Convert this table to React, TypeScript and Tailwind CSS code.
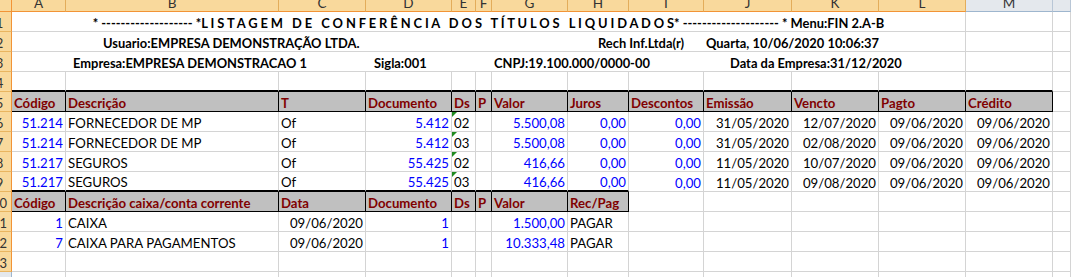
import React from "react";

type Cell = {
  t?: string;
  a?: "l" | "r";
  c?: "blue" | "black";
  tri?: boolean;
};

const COLS = ["A", "B", "C", "D", "E", "F", "G", "H", "I", "J", "K", "L", "M", ""];

function gridBorder(r: number, c: number): string {
  let b = "";
  if (r === 4 && c >= 1 && c <= 13) b += " border-b-2 border-b-black";
  else if (r === 5 && c >= 1 && c <= 13) b += " border-b border-b-black";
  else if (r === 9 && c >= 1 && c <= 8) b += " border-b-2 border-b-black";
  else if (r === 10 && c >= 1 && c <= 8) b += " border-b border-b-black";
  else b += " border-b border-b-[#d4d4d4]";
  if (r === 5 && c >= 1 && c <= 13) b += " border-r border-r-black";
  else if (r === 10 && c >= 1 && c <= 8) b += " border-r border-r-black";
  else b += " border-r border-r-[#d4d4d4]";
  return b;
}

function RowHeader({ n }: { n: number }) {
  const sel = n <= 13;
  return (
    <div
      className={
        "flex items-end overflow-hidden border-r border-b text-[13px] leading-[15px] text-[#333] " +
        (sel
          ? "bg-[#f9d99c] border-r-[#f29436] border-b-[#e9b560]"
          : "bg-[#e4e8ed] border-r-[#9eb6ce] border-b-[#c5d0dc]")
      }
    >
      <div className="w-[25px] -ml-[13px] shrink-0 text-center">{n}</div>
    </div>
  );
}

function DataCell({ r, c, cell, header }: { r: number; c: number; cell?: Cell; header: boolean }) {
  const align = cell?.a === "r" ? " justify-end" : " justify-start";
  const color = header
    ? " font-bold text-[#800000]"
    : cell?.c === "blue"
    ? " text-[#0000ff]"
    : " text-black";
  const bg = header ? " bg-[#c0c0c0]" : " bg-white";
  return (
    <div
      className={
        "relative flex items-end overflow-hidden whitespace-nowrap px-[2px] leading-[15px]" +
        align +
        color +
        bg +
        gridBorder(r, c)
      }
    >
      {cell?.tri ? (
        <div className="absolute left-0 top-0 h-0 w-0 border-t-[5px] border-r-[5px] border-t-[#208a20] border-r-transparent" />
      ) : null}
      {cell?.t ?? ""}
    </div>
  );
}

function Row({ r, cells, header = false, headerUpTo = 0 }: { r: number; cells: (Cell | undefined)[]; header?: boolean; headerUpTo?: number }) {
  return (
    <>
      <RowHeader n={r} />
      {COLS.map((_, i) => (
        <DataCell
          key={i}
          r={r}
          c={i + 1}
          cell={cells[i]}
          header={header && i + 1 <= headerUpTo}
        />
      ))}
    </>
  );
}

const L = (t: string, c: "blue" | "black" = "black"): Cell => ({ t, a: "l", c });
const R = (t: string, c: "blue" | "black" = "black"): Cell => ({ t, a: "r", c });

const headerRow1: (Cell | undefined)[] = [
  L("Código"), L("Descrição"), L("T"), L("Documento"), L("Ds"), L("P"), L("Valor"),
  L("Juros"), L("Descontos"), L("Emissão"), L("Vencto"), L("Pagto"), L("Crédito"),
];

const titulos = [
  ["51.214", "FORNECEDOR DE MP", "5.412", "02", "5.500,08", "31/05/2020", "12/07/2020"],
  ["51.214", "FORNECEDOR DE MP", "5.412", "03", "5.500,08", "31/05/2020", "02/08/2020"],
  ["51.217", "SEGUROS", "55.425", "02", "416,66", "11/05/2020", "10/07/2020"],
  ["51.217", "SEGUROS", "55.425", "03", "416,66", "11/05/2020", "09/08/2020"],
];

const headerRow2: (Cell | undefined)[] = [
  L("Código"), L("Descrição caixa/conta corrente"), L("Data"), L("Documento"), L("Ds"), L("P"),
  L("Valor"), L("Rec/Pag"),
];

const caixas = [
  ["1", "CAIXA", "09/06/2020", "1", "1.500,00", "PAGAR"],
  ["7", "CAIXA PARA PAGAMENTOS", "09/06/2020", "1", "10.333,48", "PAGAR"],
];

function TitleRow({ r, children }: { r: number; children: React.ReactNode }) {
  return (
    <>
      <RowHeader n={r} />
      <div className="col-span-12 flex items-end justify-center overflow-hidden whitespace-pre border-r border-b border-r-[#d4d4d4] border-b-[#d4d4d4] bg-white text-[12.9px] font-bold leading-[15px] text-black">
        {children}
      </div>
      <div className="border-r border-b border-[#d4d4d4] bg-white" />
      <div className="border-r border-b border-[#d4d4d4] bg-white" />
    </>
  );
}

export default function App() {
  return (
    <div className="h-[277px] w-[1071px] overflow-hidden bg-white font-['Lato','Liberation_Sans',sans-serif] text-[13.2px]">
      <div className="grid grid-cols-[12px_54px_213px_87px_86px_24px_16px_76px_61px_75px_88px_87px_87px_87px_18px] grid-rows-[12px_repeat(14,20px)]">
        {/* column headers */}
        <div className="border-r border-b border-r-[#f29436] border-b-[#f29436] bg-[#f9d99c]" />
        {COLS.map((h, i) => (
          <div
            key={h + i}
            className={
              "flex items-end justify-center overflow-hidden border-r border-b pb-[2px] text-[13.5px] leading-[12px] text-[#333] " +
              (i < 12
                ? "bg-[#f9d99c] border-r-[#e3ad5b] border-b-[#f29436]"
                : "bg-[#e4e8ed] border-r-[#b8c6d6] border-b-[#9eb6ce]")
            }
          >
            {h}
          </div>
        ))}

        <TitleRow r={1}>
          <span>{"* ------------------- *"}</span>
          <span className="tracking-[-0.1px]">
            {"L I S T A G E M   D E   C O N F E R Ê N C I A   D O S   T Í T U L O S   L I Q U I D A D O S"}
          </span>
          <span>{"* -------------------- * Menu:FIN 2.A-B"}</span>
        </TitleRow>
        <TitleRow r={2}>
          <div className="flex w-[771px]">
            <span className="w-[495px]">Usuario:EMPRESA DEMONSTRAÇÃO LTDA.</span>
            <span className="w-[108px]">Rech Inf.Ltda(r)</span>
            <span className="w-[168px]">Quarta, 10/06/2020 10:06:37</span>
          </div>
        </TitleRow>
        <TitleRow r={3}>
          <div className="flex w-[831px]">
            <span className="w-[301px]">Empresa:EMPRESA DEMONSTRACAO 1</span>
            <span className="w-[120px]">Sigla:001</span>
            <span className="w-[236px]">CNPJ:19.100.000/0000-00</span>
            <span className="w-[174px]">Data da Empresa:31/12/2020</span>
          </div>
        </TitleRow>

        <Row r={4} cells={[]} />
        <Row r={5} cells={headerRow1} header headerUpTo={13} />
        {titulos.map((d, i) => (
          <Row
            key={i}
            r={6 + i}
            cells={[
              R(d[0], "blue"),
              L(d[1]),
              L("Of"),
              R(d[2], "blue"),
              { t: d[3], a: "l", c: "black", tri: true },
              undefined,
              R(d[4], "blue"),
              R("0,00", "blue"),
              R("0,00", "blue"),
              R(d[5]),
              R(d[6]),
              R("09/06/2020"),
              R("09/06/2020"),
            ]}
          />
        ))}
        <Row r={10} cells={headerRow2} header headerUpTo={8} />
        {caixas.map((d, i) => (
          <Row
            key={i}
            r={11 + i}
            cells={[
              R(d[0], "blue"),
              L(d[1]),
              R(d[2]),
              R(d[3], "blue"),
              undefined,
              undefined,
              R(d[4], "blue"),
              L(d[5]),
            ]}
          />
        ))}
        <Row r={13} cells={[]} />
        <Row r={14} cells={[]} />
      </div>
    </div>
  );
}
